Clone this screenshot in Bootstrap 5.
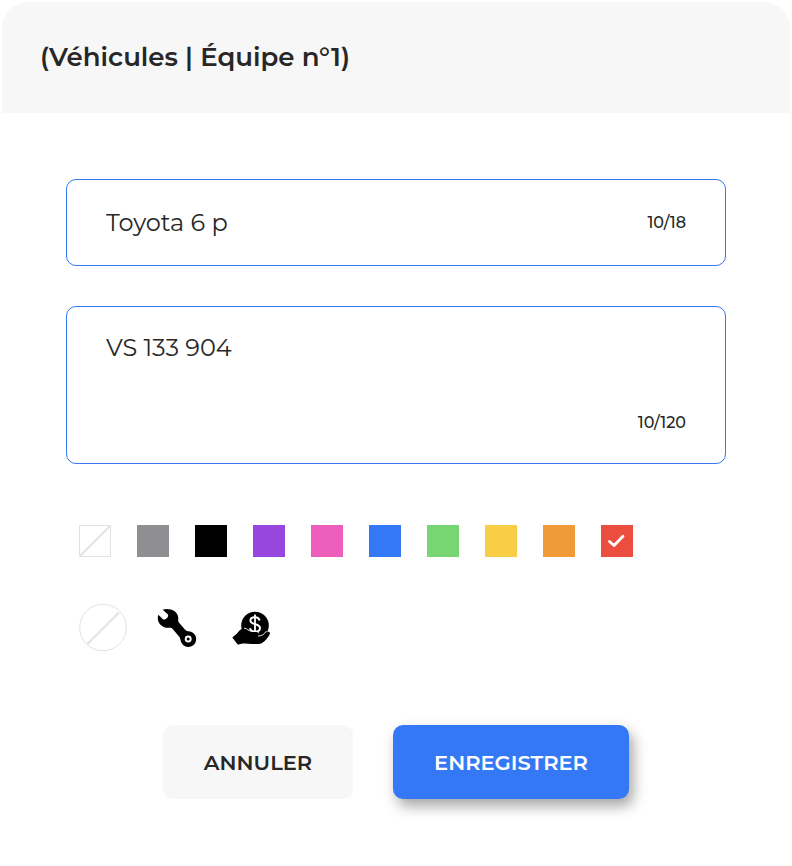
<!DOCTYPE html>
<html lang="fr">
<head>
<meta charset="utf-8">
<meta name="viewport" content="width=device-width, initial-scale=1">
<title>Véhicules | Équipe n°1</title>
<link href="https://cdn.jsdelivr.net/npm/bootstrap@5.3.0/dist/css/bootstrap.min.css" rel="stylesheet">
<style>
  body { font-family: Montserrat, Inter, sans-serif; color: #272727; background: #fff; }
  .dialog-page { padding: 2px; }
  .dialog-head { background: #f7f7f7; border-radius: 26px 26px 0 0; padding: 38px; }
  .dialog-head h1 { font-size: 26px; line-height: 35px; font-weight: 600; }
  .dialog-body { padding: 66px 64px; }
  .field { border: 1px solid #3478f6; border-radius: 10px; padding: 24px 39px; }
  .field .form-control { font-size: 24px; line-height: 37px; color: #272727; resize: none; }
  .field .form-control:focus { box-shadow: none; }
  .field-stack { gap: 40px; }
  .field-note { padding: 22px 39px 28px; }
  .counter { font-size: 16px; line-height: 24px; font-weight: 500; }
  .note-text { height: 74px; }
  .options { gap: 26px; padding: 0 13px; }
  .colours { margin-top: 61px; }
  .symbols { margin-top: 47px; }
  .swatch { width: 32px; height: 32px; cursor: pointer; }
  .symbol { width: 48px; height: 48px; cursor: pointer; }
  .swatch svg, .symbol svg { display: block; width: 100%; height: 100%; }
  .swatch .tick { visibility: hidden; }
  .btn-check:checked + .swatch .tick { visibility: visible; }
  .c-grey { background: #8e8e93; } .c-black { background: #000; } .c-purple { background: #9747dd; }
  .c-pink { background: #ee5fbb; } .c-blue { background: #3478f6; } .c-green { background: #78d672; }
  .c-yellow { background: #f8ce46; } .c-orange { background: #f19a38; } .c-red { background: #eb4e3e; }
  .actions { gap: 40px; margin-top: 73px; }
  .actions .btn { font-size: 21px; line-height: 30px; font-weight: 600; padding: 23px 40px 21px; border: 0; border-radius: 10px; }
  .btn-cancel, .btn-cancel:hover { background: #f7f7f7; color: #272727; min-width: 190px; }
  .btn-save, .btn-save:hover { background: #3478f6; color: #fff; min-width: 236px; box-shadow: 4px 7px 14px rgba(0,0,0,.36); }
</style>
<script src="https://cdn.jsdelivr.net/npm/bootstrap@5.3.0/dist/js/bootstrap.bundle.min.js"></script>
</head>
<body>
<main class="dialog-page">
  <form>
    <header class="dialog-head"><h1 class="m-0">(Véhicules | Équipe n°1)</h1></header>
    <div class="dialog-body">
      <div class="field-stack d-flex flex-column">
        <div class="field d-flex align-items-center">
          <input id="name" type="text" class="form-control border-0 p-0" maxlength="18" value="Toyota 6 p" aria-label="Nom">
          <label class="counter" for="name">10/18</label>
        </div>
        <div class="field field-note d-flex flex-column">
          <textarea id="note" class="note-text form-control border-0 p-0" maxlength="120" aria-label="Description">VS 133 904</textarea>
          <label class="counter text-end pt-2" for="note">10/120</label>
        </div>
      </div>

      <div class="options colours d-flex flex-wrap" role="radiogroup" aria-label="Couleur">
        <div><input class="btn-check" type="radio" name="colour" id="c0" aria-label="Aucune couleur"><label class="swatch d-block" for="c0"><svg viewBox="0 0 32 32" fill="none" stroke="#e2e2e5"><path d="M.5.5h31v31H.5z"/><path d="M1 31 31 1" stroke-width="2"/></svg></label></div>
        <div><input class="btn-check" type="radio" name="colour" id="c1" aria-label="Gris"><label class="swatch d-block c-grey" for="c1"></label></div>
        <div><input class="btn-check" type="radio" name="colour" id="c2" aria-label="Noir"><label class="swatch d-block c-black" for="c2"></label></div>
        <div><input class="btn-check" type="radio" name="colour" id="c3" aria-label="Violet"><label class="swatch d-block c-purple" for="c3"></label></div>
        <div><input class="btn-check" type="radio" name="colour" id="c4" aria-label="Rose"><label class="swatch d-block c-pink" for="c4"></label></div>
        <div><input class="btn-check" type="radio" name="colour" id="c5" aria-label="Bleu"><label class="swatch d-block c-blue" for="c5"></label></div>
        <div><input class="btn-check" type="radio" name="colour" id="c6" aria-label="Vert"><label class="swatch d-block c-green" for="c6"></label></div>
        <div><input class="btn-check" type="radio" name="colour" id="c7" aria-label="Jaune"><label class="swatch d-block c-yellow" for="c7"></label></div>
        <div><input class="btn-check" type="radio" name="colour" id="c8" aria-label="Orange"><label class="swatch d-block c-orange" for="c8"></label></div>
        <div><input class="btn-check" type="radio" name="colour" id="c9" aria-label="Rouge" checked><label class="swatch d-block c-red" for="c9"><svg class="tick" viewBox="0 0 32 32" fill="none" stroke="#fff" stroke-width="2.8" stroke-linecap="round" stroke-linejoin="round"><path d="m8.500 16.500 4.500 4 9-9.300"/></svg></label></div>
      </div>

      <div class="options symbols d-flex flex-wrap" role="radiogroup" aria-label="Icône">
        <div><input class="btn-check" type="radio" name="symbol" id="s0" aria-label="Aucune icône"><label class="symbol d-block" for="s0"><svg viewBox="0 0 48 48" fill="none" stroke="#e2e2e5"><circle cx="24" cy="23.5" r="23.3"/><path d="M8 40.5 40 8.5" stroke-width="2"/></svg></label></div>
        <div><input class="btn-check" type="radio" name="symbol" id="s1" aria-label="Clé"><label class="symbol d-block" for="s1"><svg viewBox="0 0 48 48"><path d="M9.700 5.700C12 4.800 15 4.700 18 5.500c5 1.300 8 5.700 7.200 10.500-.2 1.300.2 2 1.100 3l5.400 6.300c.9 1.100 1.900 1.600 3.300 1.900a7.900 7.900 0 1 1-7.600 8.400c-.2-1.500-.7-2.500-1.800-3.700l-5.900-7c-.9-1.100-1.900-1.400-3.200-1.200C10.600 24.500 5.300 20.500 4.800 15c-.1-1.400.1-2.900.6-4.200l4.800 4.600c.9.500 3.100-.6 4-1.700.9-1 1.200-2.100.8-3.200z"/><circle cx="35.200" cy="35" r="2.500" fill="#000" stroke="#fff" stroke-width="1.900"/></svg></label></div>
        <div><input class="btn-check" type="radio" name="symbol" id="s2" aria-label="Paiement"><label class="symbol d-block" for="s2"><svg viewBox="0 0 48 48"><circle cx="28" cy="21.500" r="13.800"/><g fill="none" stroke="#fff" stroke-width="2"><path d="M32.600 16.400c-.5-2-2.200-3.200-4.600-3.200-2.800 0-4.600 1.400-4.600 3.400 0 4.800 9.600 2.600 9.600 7.400 0 2.200-2.100 3.600-5 3.600-2.800 0-4.600-1.200-5-3.400"/><path d="M28 10.500v19" stroke-width="1.800"/></g><path d="M5.300 33.600 10 29.500c1.600-2 3.200-4.600 6-5 3.500-.4 5.200 2.800 8.200 3.200 3.700.4 7-.1 7.200 1.700.1 1.200-.7 1.800-2 2.100l-4.200.8 9.200.2c2.500-.9 4.300-4.200 6.200-4.600 1.700-.3 2.800.7 2.100 2.300-1.700 3.300-4.400 7.200-8.100 9-3.800 1.500-13.300.6-18.600.4-2.500 0-3.800 1.300-5.500.6z"/><path d="M17 24c3 .5 4.500 3 7.500 3.200 3.600.2 7.200 0 7.400 2.200M31 32c4 0 6-1.500 8.500-5" fill="none" stroke="#fff" stroke-width=".9"/></svg></label></div>
      </div>

      <div class="actions d-flex flex-wrap justify-content-center">
        <button type="button" class="btn btn-cancel">ANNULER</button>
        <button type="button" class="btn btn-save">ENREGISTRER</button>
      </div>
    </div>
  </form>
</main>
</body>
</html>
